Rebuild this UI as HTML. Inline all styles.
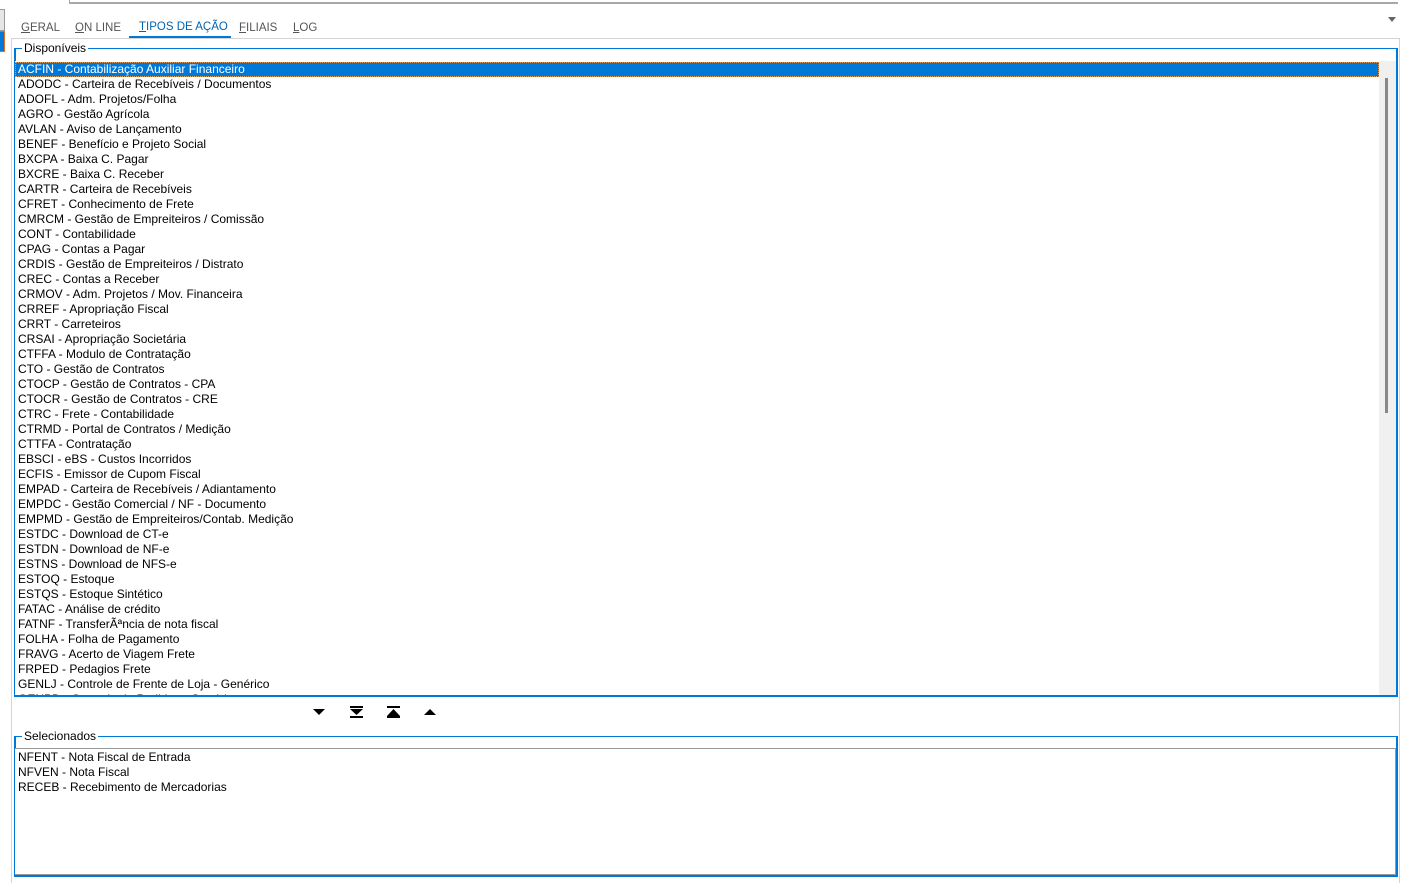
<!DOCTYPE html>
<html><head><meta charset="utf-8"><style>
*{margin:0;padding:0;box-sizing:border-box}
body{width:1403px;height:877px;background:#fff;position:relative;overflow:hidden;font-family:"Segoe UI","Liberation Sans",sans-serif;font-size:12px;color:#000}
.abs{position:absolute}
.tab{position:absolute;top:22px;font-size:11.5px;color:#555}
.tab u{text-decoration:underline}
.grp{position:absolute;border:1px solid #0078d7}
.leg{position:absolute;background:#fff;padding:0 2px;font-size:12px;line-height:14px}
.list{position:absolute;overflow:hidden;background:#fff}
.it{height:15px;line-height:15px;padding-left:3px;white-space:nowrap}
.sel{background:#0078d7;color:#fff;outline:1px dotted #e0a060;outline-offset:-1px}
</style></head><body>
<div class="abs" style="left:70px;top:2px;width:1328px;height:2px;background:#a8a8a8"></div>
<div class="abs" style="left:69px;top:0;width:1px;height:4px;background:#a8a8a8"></div>
<div class="abs" style="left:0;top:9px;width:5px;height:22px;background:#e6e6e6;border:1px solid #999;border-left:none"></div>
<div class="abs" style="left:0;top:31px;width:5px;height:21px;background:#0078d7;border:1px solid #e07020;border-left:none"></div>
<div class="abs" style="left:1388px;top:17px;width:0;height:0;border-left:4px solid transparent;border-right:4px solid transparent;border-top:5px solid #666"></div>

<div class="tab" style="left:21px"><u>G</u>ERAL</div>
<div class="tab" style="left:75px"><u>O</u>N LINE</div>
<div class="tab" style="left:139px;top:21px;color:#0063b1"><u>T</u>IPOS DE AÇÃO</div>
<div class="abs" style="left:129px;top:36px;width:102px;height:2px;background:#0078d7"></div>
<div class="tab" style="left:239px"><u>F</u>ILIAIS</div>
<div class="tab" style="left:293px"><u>L</u>OG</div>

<div class="abs" style="left:11px;top:38px;width:1389px;height:845px;border:1px solid #d4d4d4;border-bottom:none"></div>

<div class="grp" style="left:14px;top:48px;width:1384px;height:649px;border-width:1px 2px 2px 2px"></div>
<div class="leg" style="left:22px;top:41px">Disponíveis</div>
<div class="list" style="left:15px;top:61px;width:1364px;height:634px;padding-top:1px">
<div class="it sel">ACFIN - Contabilização Auxiliar Financeiro</div>
<div class="it">ADODC - Carteira de Recebíveis / Documentos</div>
<div class="it">ADOFL - Adm. Projetos/Folha</div>
<div class="it">AGRO - Gestão Agrícola</div>
<div class="it">AVLAN - Aviso de Lançamento</div>
<div class="it">BENEF - Benefício e Projeto Social</div>
<div class="it">BXCPA - Baixa C. Pagar</div>
<div class="it">BXCRE - Baixa C. Receber</div>
<div class="it">CARTR - Carteira de Recebíveis</div>
<div class="it">CFRET - Conhecimento de Frete</div>
<div class="it">CMRCM - Gestão de Empreiteiros / Comissão</div>
<div class="it">CONT - Contabilidade</div>
<div class="it">CPAG - Contas a Pagar</div>
<div class="it">CRDIS - Gestão de Empreiteiros / Distrato</div>
<div class="it">CREC - Contas a Receber</div>
<div class="it">CRMOV - Adm. Projetos / Mov. Financeira</div>
<div class="it">CRREF - Apropriação Fiscal</div>
<div class="it">CRRT - Carreteiros</div>
<div class="it">CRSAI - Apropriação Societária</div>
<div class="it">CTFFA - Modulo de Contratação</div>
<div class="it">CTO - Gestão de Contratos</div>
<div class="it">CTOCP - Gestão de Contratos - CPA</div>
<div class="it">CTOCR - Gestão de Contratos - CRE</div>
<div class="it">CTRC - Frete - Contabilidade</div>
<div class="it">CTRMD - Portal de Contratos / Medição</div>
<div class="it">CTTFA - Contratação</div>
<div class="it">EBSCI - eBS - Custos Incorridos</div>
<div class="it">ECFIS - Emissor de Cupom Fiscal</div>
<div class="it">EMPAD - Carteira de Recebíveis / Adiantamento</div>
<div class="it">EMPDC - Gestão Comercial / NF - Documento</div>
<div class="it">EMPMD - Gestão de Empreiteiros/Contab. Medição</div>
<div class="it">ESTDC - Download de CT-e</div>
<div class="it">ESTDN - Download de NF-e</div>
<div class="it">ESTNS - Download de NFS-e</div>
<div class="it">ESTOQ - Estoque</div>
<div class="it">ESTQS - Estoque Sintético</div>
<div class="it">FATAC - Análise de crédito</div>
<div class="it">FATNF - TransferÃªncia de nota fiscal</div>
<div class="it">FOLHA - Folha de Pagamento</div>
<div class="it">FRAVG - Acerto de Viagem Frete</div>
<div class="it">FRPED - Pedagios Frete</div>
<div class="it">GENLJ - Controle de Frente de Loja - Genérico</div>
<div class="it">GENPD - Controle de Pedidos - Genérico</div>
</div>
<div class="abs" style="left:1379px;top:61px;width:17px;height:634px;background:#f0f0f0"></div>
<div class="abs" style="left:1385px;top:78px;width:3px;height:335px;background:#888"></div>

<svg class="abs" style="left:310px;top:704px" width="130" height="16">
<polygon points="3,5 15,5 9,11" fill="#000"/>
<rect x="40" y="2" width="13" height="2" fill="#000"/><polygon points="40,5 53,5 46.5,11" fill="#000"/><rect x="40" y="12" width="13" height="2" fill="#000"/>
<rect x="77" y="2" width="13" height="2" fill="#000"/><polygon points="77,12 90,12 83.5,5" fill="#000"/><rect x="77" y="12" width="13" height="2" fill="#000"/>
<polygon points="114,11 126,11 120,5" fill="#000"/>
</svg>

<div class="grp" style="left:14px;top:736px;width:1384px;height:141px;border-width:1px 2px 2px 2px"></div>
<div class="leg" style="left:22px;top:729px">Selecionados</div>
<div class="list" style="left:15px;top:748px;width:1381px;height:127px;border:1px solid #999;border-left:none">
<div class="it" style="margin-top:1px">NFENT - Nota Fiscal de Entrada</div>
<div class="it">NFVEN - Nota Fiscal</div>
<div class="it">RECEB - Recebimento de Mercadorias</div>
</div>
</body></html>
